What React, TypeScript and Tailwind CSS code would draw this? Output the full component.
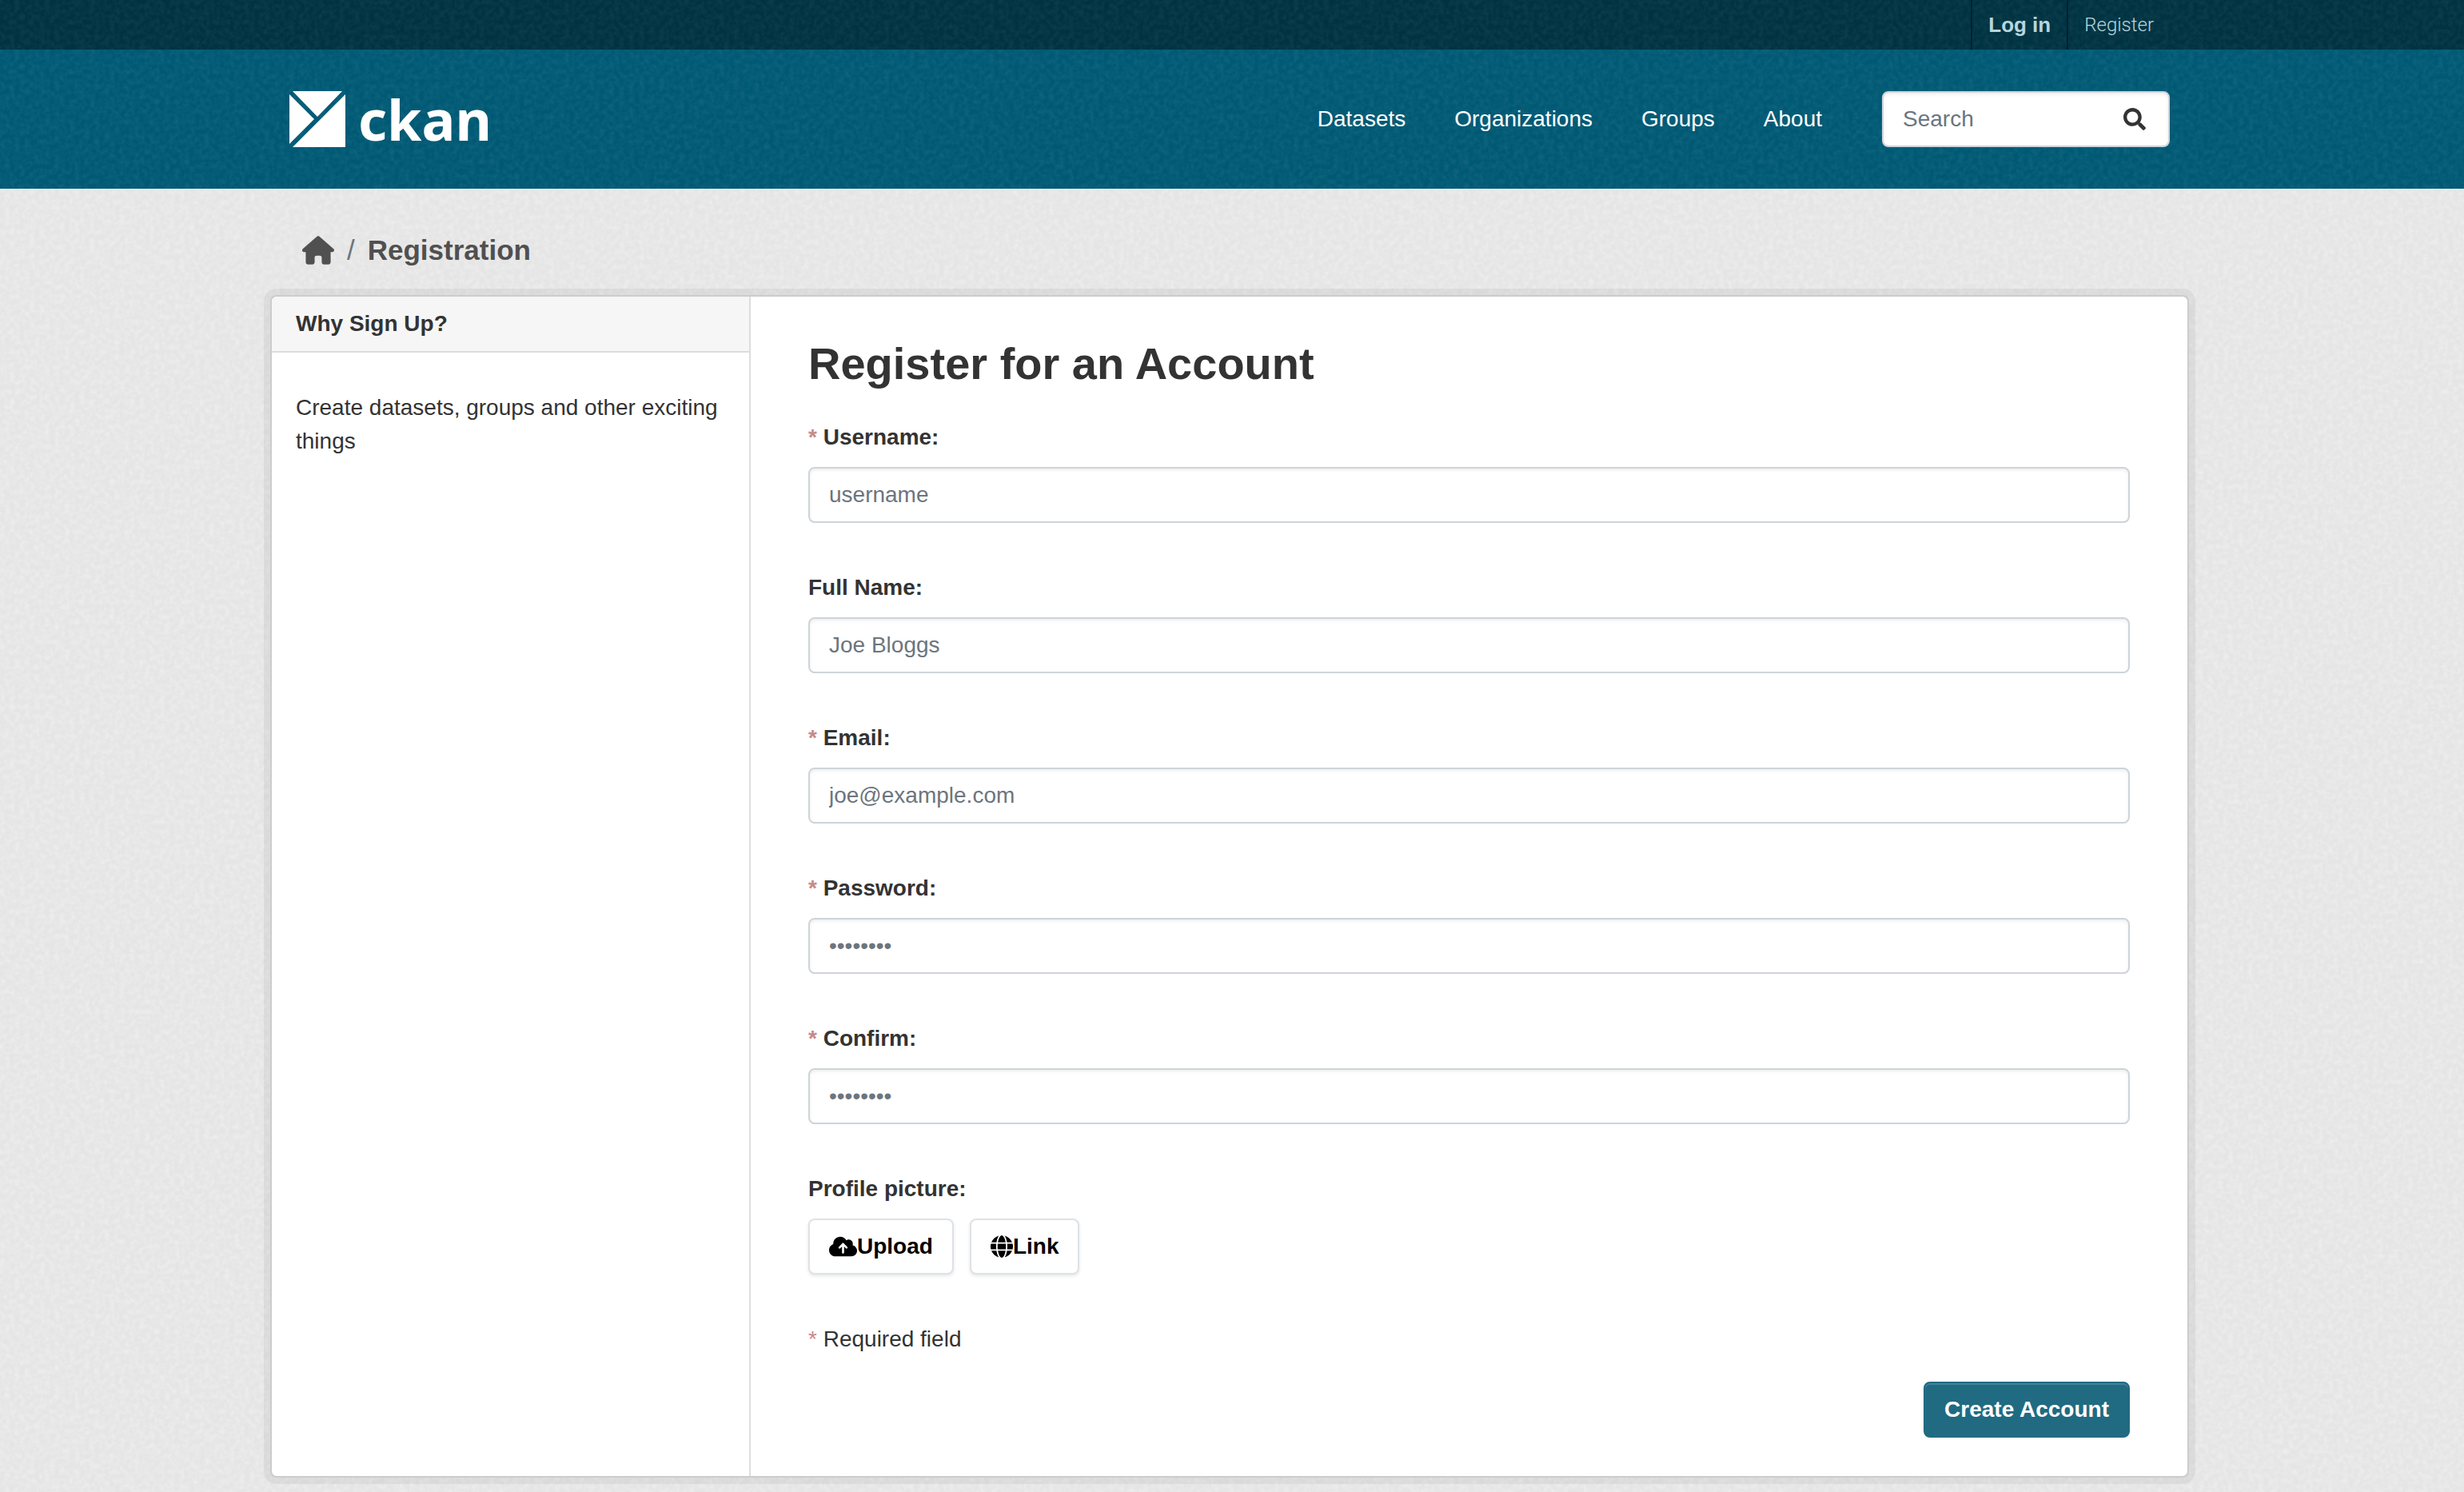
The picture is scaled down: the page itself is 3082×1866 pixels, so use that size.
import React from "react";
import { FaSearch } from "react-icons/fa";
import { FaCloudArrowUp, FaGlobe, FaHouse } from "react-icons/fa6";

const container = "mx-auto w-full max-w-[2400px]";

function Grain({ id, strength }: { id: string; strength: number }) {
  return (
    <svg className="pointer-events-none absolute inset-0 h-full w-full" aria-hidden="true">
      <filter id={id} x="0" y="0" width="100%" height="100%" colorInterpolationFilters="sRGB">
        <feTurbulence type="fractalNoise" baseFrequency="0.16" numOctaves={2} seed={4} />
        <feColorMatrix values={`0 0 0 0 1  0 0 0 0 1  0 0 0 0 1  ${strength} 0 0 0 ${-0.35 * strength}`} />
      </filter>
      <rect width="100%" height="100%" filter={`url(#${id})`} />
    </svg>
  );
}

function Logo() {
  return (
    <a href="#" className="flex items-center gap-4 text-white" aria-label="ckan">
      <svg viewBox="0 0 70 70" className="h-[70px] w-[70px]" fill="currentColor" aria-hidden="true">
        <path d="M4 0H66L35 32Z" />
        <path d="M0 4L31 35L0 66Z" />
        <path d="M70 4V70H4Z" />
      </svg>
      <span className="font-['Noto_Sans'] text-[70px] leading-[70px] font-bold">ckan</span>
    </a>
  );
}

function Star() {
  return <span className="text-[#c6898b]">* </span>;
}

type FieldProps = { id: string; label: string; placeholder: string; type?: string; required?: boolean };

function Field({ id, label, placeholder, type = "text", required = false }: FieldProps) {
  return (
    <div className="mb-[60px]">
      <label htmlFor={id} className="mb-4 block leading-[42px] font-bold">
        {required && <Star />}
        {label}:
      </label>
      <input
        id={id}
        type={type}
        placeholder={placeholder}
        className="block h-[70px] w-full rounded-lg border-2 border-[#ced4da] bg-white px-6 shadow-[inset_0_2px_4px_rgba(0,0,0,0.075)] placeholder:text-[#6c757d]"
      />
    </div>
  );
}

const uploadButton =
  "flex h-[70px] items-center rounded-lg border-2 border-[#dee2e6] bg-white px-6 font-bold text-black shadow-[0_2px_4px_rgba(0,0,0,0.1)]";

export default function App() {
  return (
    <div className="relative min-h-screen bg-[#e5e5e5] font-['Liberation_Sans',Arial,sans-serif] text-[28px] leading-[42px] text-[#333]">
      <Grain id="grain-page" strength={0.6} />

      <div className="relative bg-[#003342] pr-1.5">
        <Grain id="grain-account" strength={0.1} />
        <nav className={`${container} relative flex h-[62px] justify-end pr-6 text-[26px] text-[#b8d5dd]`} aria-label="Account">
          <a href="#" className="flex items-center border-l-2 border-[#00232e] px-5 font-bold">
            Log in
          </a>
          <a href="#" className="flex items-center border-l-2 border-[#00232e] px-5 font-['Roboto'] text-[24px] font-light">
            Register
          </a>
        </nav>
      </div>

      <header className="relative bg-[#005974] pr-1.5">
        <Grain id="grain-masthead" strength={0.12} />
        <div className={`${container} relative flex h-[174px] items-center justify-between px-6`}>
          <Logo />
          <div className="flex items-center gap-[75px]">
            <nav className="flex gap-[61px] text-white" aria-label="Main">
              <a href="#">Datasets</a>
              <a href="#">Organizations</a>
              <a href="#">Groups</a>
              <a href="#">About</a>
            </nav>
            <form className="flex h-[70px] w-[360px] items-center rounded-lg border-2 border-[#ced4da] bg-white shadow-[inset_0_2px_4px_rgba(0,0,0,0.075)]">
              <input
                type="search"
                aria-label="Search"
                placeholder="Search"
                className="min-w-0 flex-1 bg-transparent pl-6 placeholder:text-[#6c757d]"
              />
              <button type="button" aria-label="Submit search" className="px-7">
                <FaSearch className="h-7 w-7" />
              </button>
            </form>
          </div>
        </div>
      </header>

      <main className="relative pr-1.5 pb-[18px]">
        <div className={container}>
          <nav className="flex h-[133px] items-center pt-5 pl-10 text-[35px] text-[#505050]" aria-label="Breadcrumb">
            <div className="flex items-center gap-4">
              <a href="#" aria-label="Home">
                <FaHouse className="h-9 w-10" />
              </a>
              <span className="text-[#6c757d]">/</span>
              <a href="#" className="font-bold">
                Registration
              </a>
            </div>
          </nav>

          <div className="flex overflow-hidden rounded-lg border-2 border-[#ccc] bg-white shadow-[0_0_0_8px_rgba(0,0,0,0.05)]">
            <aside className="w-1/4 border-r-2 border-[#ddd]">
              <h2 className="border-b-2 border-[#ddd] bg-[#f6f6f6] px-[30px] py-3.5 leading-10 font-bold">Why Sign Up?</h2>
              <p className="px-[30px] py-12">Create datasets, groups and other exciting things</p>
            </aside>

            <form className="flex-1 px-[72px] pt-[50px] pb-12">
              <h1 className="mb-[37px] text-[56px] leading-[68px] font-bold">Register for an Account</h1>
              <Field id="username" label="Username" placeholder="username" required />
              <Field id="fullname" label="Full Name" placeholder="Joe Bloggs" />
              <Field id="email" label="Email" placeholder="joe@example.com" type="email" required />
              <Field id="password" label="Password" placeholder="••••••••" type="password" required />
              <Field id="confirm" label="Confirm" placeholder="••••••••" type="password" required />

              <div className="mb-[60px]" role="group" aria-labelledby="picture-label">
                <div id="picture-label" className="mb-4 font-bold">
                  Profile picture:
                </div>
                <div className="flex gap-5">
                  <button type="button" className={uploadButton}>
                    <FaCloudArrowUp className="h-7 w-[35px]" />
                    Upload
                  </button>
                  <button type="button" className={uploadButton}>
                    <FaGlobe className="h-7 w-7" />
                    Link
                  </button>
                </div>
              </div>

              <p className="mb-8">
                <Star />
                Required field
              </p>
              <div className="flex justify-end">
                <button
                  type="button"
                  className="h-[70px] rounded-lg border-2 border-[#206b82] bg-[#206b82] px-6 font-bold text-white shadow-[inset_0_2px_0_rgba(255,255,255,0.15)]"
                >
                  Create Account
                </button>
              </div>
            </form>
          </div>
        </div>
      </main>
    </div>
  );
}
